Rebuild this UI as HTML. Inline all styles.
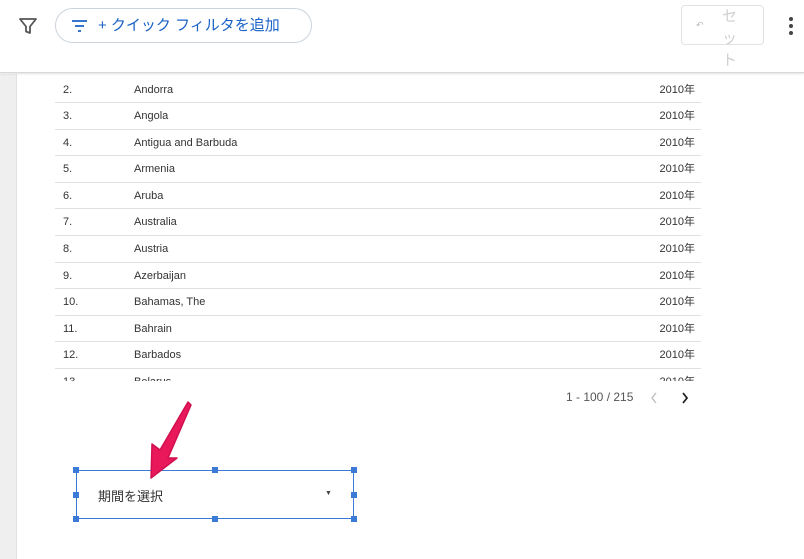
<!DOCTYPE html>
<html><head><meta charset="utf-8"><style>
*{margin:0;padding:0;box-sizing:border-box}
body{width:804px;height:559px;overflow:hidden;background:#fff;font-family:"Liberation Sans","Noto Sans CJK JP",sans-serif;position:relative}
.hdr{position:absolute;left:0;top:0;width:804px;height:73px;background:#fff;border-bottom:1px solid #d8d8d8;box-shadow:0 1px 2px rgba(0,0,0,.12);z-index:3}
.strip{position:absolute;left:0;top:74px;width:17px;height:485px;background:#efefef;border-right:1px solid #e2e2e2}
.chip{position:absolute;left:55px;top:8px;width:257px;height:35px;border:1px solid #ccd3dc;border-radius:18px;color:#1a63c6;font-size:15px;line-height:33px;padding-left:42px}
.reset{position:absolute;left:681px;top:5px;width:83px;height:40px;border:1px solid #e2e2e2;border-radius:4px}
.tbl{position:absolute;left:55px;top:77px;width:646px;height:304px;overflow:hidden}
.row{height:26.6px;border-bottom:1px solid #e0e0e0;font-size:11px;color:#333;position:relative;line-height:26px}
.row span{position:absolute}
.pg{position:absolute;left:566px;top:390px;font-size:12px;color:#555}
.sel{position:absolute;left:76px;top:470px;width:278px;height:49px;border:1.5px solid #3b7ad6}
.h{position:absolute;width:6px;height:6px;background:#3b7ad6}
</style></head><body>
<div class="hdr">
<svg style="position:absolute;left:18px;top:16px" width="20" height="20" viewBox="0 0 20 20"><path d="M2 3h16l-6 7.5V17l-4-1.5v-5z" fill="none" stroke="#555" stroke-width="1.8" stroke-linejoin="round"/></svg>
<div class="chip"><svg style="position:absolute;left:16px;top:11px" width="15" height="12" viewBox="0 0 15 12"><path d="M0 1h15M3 6h9M6 11h3" stroke="#1a63c6" stroke-width="1.8"/></svg>+ クイック フィルタを追加</div>
<div class="reset"><span style="position:absolute;left:14px;top:14px;font-size:9px;color:#bbb">↶</span><span style="position:absolute;left:40px;top:0;font-size:15px;color:#d0d0d0;width:16px;line-height:22px">セット</span></div>
<div style="position:absolute;left:789px;top:17px;width:4px;height:4px;border-radius:2px;background:#444;box-shadow:0 7px 0 #444,0 14px 0 #444"></div>
</div>
<div class="strip"></div>
<div class="tbl">
<div class="row" style="height:26px"><span style="left:8px">2.</span><span style="left:79px">Andorra</span><span style="right:6px">2010年</span></div>
<div class="row"><span style="left:8px">3.</span><span style="left:79px">Angola</span><span style="right:6px">2010年</span></div>
<div class="row"><span style="left:8px">4.</span><span style="left:79px">Antigua and Barbuda</span><span style="right:6px">2010年</span></div>
<div class="row"><span style="left:8px">5.</span><span style="left:79px">Armenia</span><span style="right:6px">2010年</span></div>
<div class="row"><span style="left:8px">6.</span><span style="left:79px">Aruba</span><span style="right:6px">2010年</span></div>
<div class="row"><span style="left:8px">7.</span><span style="left:79px">Australia</span><span style="right:6px">2010年</span></div>
<div class="row"><span style="left:8px">8.</span><span style="left:79px">Austria</span><span style="right:6px">2010年</span></div>
<div class="row"><span style="left:8px">9.</span><span style="left:79px">Azerbaijan</span><span style="right:6px">2010年</span></div>
<div class="row"><span style="left:8px">10.</span><span style="left:79px">Bahamas, The</span><span style="right:6px">2010年</span></div>
<div class="row"><span style="left:8px">11.</span><span style="left:79px">Bahrain</span><span style="right:6px">2010年</span></div>
<div class="row"><span style="left:8px">12.</span><span style="left:79px">Barbados</span><span style="right:6px">2010年</span></div>
<div class="row" style="border:none"><span style="left:8px">13.</span><span style="left:79px">Belarus</span><span style="right:6px">2010年</span></div>
</div>
<div class="pg">1 - 100 / 215</div>
<svg style="position:absolute;left:648px;top:391px" width="50" height="14" viewBox="0 0 50 14"><path d="M8 2l-4 5 4 5" fill="none" stroke="#bbb" stroke-width="1.3"/><path d="M35 2l4 5-4 5" fill="none" stroke="#222" stroke-width="1.8"/></svg>
<div class="sel"><span style="position:absolute;left:21px;top:15px;font-size:13px;color:#333">期間を選択</span><span style="position:absolute;left:248px;top:19px;font-size:7px;color:#444">▼</span></div>
<div class="h" style="left:73px;top:467px"></div><div class="h" style="left:212px;top:467px"></div><div class="h" style="left:351px;top:467px"></div>
<div class="h" style="left:73px;top:492px"></div><div class="h" style="left:351px;top:492px"></div>
<div class="h" style="left:73px;top:516px"></div><div class="h" style="left:212px;top:516px"></div><div class="h" style="left:351px;top:516px"></div>
<svg style="position:absolute;left:140px;top:398px" width="55" height="85" viewBox="0 0 55 85"><path d="M48 4 L51 7 L28 60 L37 60 L11 80 L12 46 L20 52 Z" fill="#e8185a" stroke="#d01050" stroke-width="1.5" stroke-linejoin="round"/></svg>
</body></html>
